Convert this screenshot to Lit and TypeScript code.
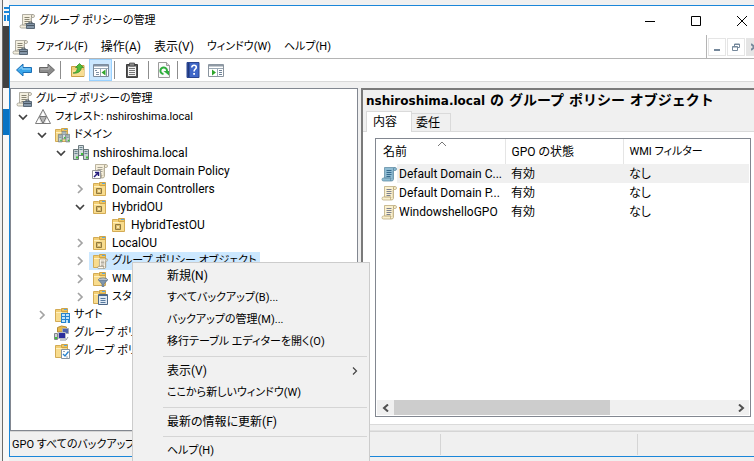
import { LitElement, html, css, svg, nothing, TemplateResult } from "lit";
import { customElement, property, state } from "lit/decorators.js";
import { classMap } from "lit/directives/class-map.js";

type Glyph = ReturnType<typeof svg>;

const folderBase = svg`
  <path d="M1.500 2.500h5l1 1h6v11h-12z" fill="#f3cf74" stroke="#d3ab55"/>
  <path d="M7.500 1.500h6v3h-6z" fill="#f0c65f" stroke="#cfa449"/>
  <path d="M10 2.500h3" stroke="#5aa7e0"/>
  <path d="M2 5h11v9h-11z" fill="#f8dc8e"/>
  <path d="M2 5.500h6" stroke="#fff0c0"/>`;

const sheet = (fill: string, edge: string, line: string) => svg`
  <path d="M3.500 1.500h10.500q1.500 0 1.500 1.500t-1.500 1.500h-1.500v8.500q0 2-2 2h-8q-1.500 0-1.500-1.500t1.500-1.500h1z" fill="${fill}" stroke="${edge}" stroke-opacity=".75"/>
  <path d="M12.500 4.500v-1.500q0-1 1-1.500M3.500 12h6.500q-1 1.500 0 3" fill="none" stroke="${edge}"/>
  <path d="M12 5v8" stroke="${edge}" stroke-opacity=".5"/>
  <path d="M5.500 4.500h5M5.500 6.500h5M5.500 8.500h5M5.500 10.500h4" stroke="${line}"/>`;

const servers = svg`
  <path d="M5.500.5h5v10h-5z" fill="#d5dde0" stroke="#6f7c80"/>
  <path d="M.5 4.500h5v10h-5zM10.500 4.500h5v10h-5z" fill="#c7d0d3" stroke="#69767a"/>
  <path d="M6.500 2.500h3M6.500 4.500h3M1.500 6.500h3M1.500 8.500h3M11.500 6.500h3M11.500 8.500h3" stroke="#6b8790"/>
  <path d="M3 11.500h2v2h-2zM13 11.500h2v2h-2zM8 8h2v2h-2z" fill="#3fc23a"/>`;

const glyphs: Record<string, Glyph> = {
  console: svg`
    ${sheet("#f4efdf", "#98958a", "#8a8674")}
    <path d="M7.500 10.500h8v5h-8z" fill="#8496a8" stroke="#5a6977"/>
    <path d="M10 10.500v-1.500h3v1.500M8 12.500h7" fill="none" stroke="#4a5763"/>`,
  forest: svg`
    <path d="M8 .5l7.500 14h-15z" fill="#dcdcdc" stroke="#7d7d7d"/>
    <path d="M4.500 7.500h7l-3.500 7z" fill="#b4b4b4" stroke="#777"/>
    <path d="M8 2.500l2 4.500h-4zM4 9.500l2 4.500h-4.500zM12 9.500l2.500 4.500h-4.500z" fill="#fff"/>`,
  domains: svg`${folderBase}<g transform="translate(4 4) scale(.75)">${servers}</g>`,
  domain: servers,
  link: svg`
    ${sheet("#f6efdb", "#a59d86", "#a6a294")}
    <path d="M.5 7.500h8v8h-8z" fill="#fff" stroke="#9a9a9a"/>
    <path d="M2 14l4-4M3 9.500h3.500v3.500" fill="none" stroke="#241c7c" stroke-width="1.500"/>`,
  ou: svg`${folderBase}
    <path d="M4.500 7.500h5v5h-5z" fill="#d9b96a" stroke="#8f7940"/>
    <path d="M6 9h2v2h-2z" fill="#f8e6ad"/>`,
  gpos: svg`${folderBase}<g transform="translate(5 5) scale(.7)">${sheet("#fffaf0", "#857c68", "#8c8878")}</g>`,
  wmi: svg`${folderBase}
    <ellipse cx="11" cy="8.500" rx="4.500" ry="1.500" fill="#e6edf3" stroke="#6d7b89"/>
    <path d="M6.500 9l3.500 4v2.500h2v-2.500l3.500-4z" fill="#7f97ae" stroke="#5e7184" stroke-width=".7"/>`,
  starter: svg`${folderBase}
    <path d="M6.500 5.500h9v10h-9z" fill="#dfe9f4" stroke="#4d6787"/>
    <path d="M6 6.500h9.500" stroke="#4d6787"/>
    <path d="M8.500 9.500h5M8.500 11.500h5M8.500 13.500h5" stroke="#56799f"/>`,
  sites: svg`${folderBase}
    <path d="M7 6h9v10h-9z" fill="#2583cf"/>
    <path d="M8 7h3v2h-3zM12 7h3v2h-3zM8 10h3v2h-3zM12 10h3v2h-3zM8 13h3v2h-3zM12 13h2v3h-2z" fill="#bfe3fb"/>`,
  modeling: svg`
    <path d="M3.500 2.500l4-1.500 5 1v5h-9z" fill="#e6b94c" stroke="#b58d38"/>
    <path d="M8.500 3.500h6v5h-6z" fill="#5163ad" stroke="#a5a9b4"/>
    <path d="M4.500 7.500h7v6h-7z" fill="#2c2d9c" stroke="#b9bcc6"/>
    <path d="M.5 8.500h3v6h-3z" fill="#d0d4d8" stroke="#80868d"/>
    <path d="M1 12h2v2h-2z" fill="#3fc23a"/>
    <path d="M6 15h6l2-3" fill="none" stroke="#9094a0"/>`,
  results: svg`${folderBase}
    <path d="M7.500 6.500h8v9h-8z" fill="#fff" stroke="#8793a0"/>
    <path d="M9 11l2 2 3.500-4.500" fill="none" stroke="#2a83cc" stroke-width="1.300"/>
    <path d="M9 8.500h2M12 14h2" stroke="#9aa7b4"/>`,
  gpo: sheet("#fbf1cf", "#b8a778", "#7d8190"),
  gpoSelected: sheet("#8fbcd3", "#5f8ba3", "#35698c"),
  back: svg`<path d="M.5 8l6.500-6v3.500h8.500v5h-8.500v3.500z" fill="#39a5ea" stroke="#1c6fb5"/><path d="M3 7.500l3-3v2.500h8.500" fill="none" stroke="#9bd7fa"/>`,
  forward: svg`<path d="M15.500 8l-6.500-6v3.500h-8.500v5h8.500v3.500z" fill="#8c8c8c" stroke="#666"/><path d="M1.500 7h8.500v-2.500" fill="none" stroke="#bdbdbd"/>`,
  up: svg`
    <path d="M1.500 4.500h5l1-1h6.500v11h-12.500z" fill="#f2cf79" stroke="#c99f45"/>
    <path d="M2 8h12v6h-12z" fill="#f8dd93"/>
    <path d="M3 11q4 0 4.500-5.500h-2l4-4 4 4h-2q-1 6.500-8.500 5.500z" fill="#4fbd3c" stroke="#2e8a24" stroke-width=".7"/>`,
  tree: svg`
    <path d="M.5 2.500h15v12h-15z" fill="#fff" stroke="#7c8a99"/>
    <path d="M1 3.500h14" stroke="#8293a5" stroke-width="2"/>
    <path d="M1 6.500h14M7.500 7v7" stroke="#9aa8b5"/>
    <path d="M2 8.500h2M3 10.500h3M3 12.500h3M13.500 7v7" stroke="#8293a5"/>
    <path d="M8.500 10.500l4-3v6z" fill="#2fa52b"/>`,
  clipboard: svg`
    <path d="M2.500 2.500h11v13h-11z" fill="#555" stroke="#3c3c3c"/>
    <path d="M4 4.500h8v9.500h-8z" fill="#f3f3f3"/>
    <path d="M5.500 1h5v3h-5z" fill="#8a8a8a" stroke="#444" stroke-width=".7"/>
    <path d="M5 6.500h6M5 8.500h6M5 10.500h6M5 12.500h6" stroke="#777"/>`,
  refresh: svg`
    <path d="M2.500.5h8l3 3v12h-11z" fill="#fafafa" stroke="#9b9b9b"/>
    <path d="M10.500.5v3h3" fill="#ddd" stroke="#9b9b9b"/>
    <path d="M7.500 12a3.300 3.300 0 1 1 3.500-3" fill="none" stroke="#2eae3c" stroke-width="2"/>
    <path d="M7.500 9h5.500v4.500z" fill="#2eae3c"/>`,
  help: svg`
    <path d="M2 .5h12v15h-12z" fill="#3f67c8" stroke="#2b4590"/>
    <path d="M3.500 1v14" stroke="#22397c" stroke-width="2"/>
    <path d="M6.700 5.500q.3-2.200 2.300-2.200 2.300 0 2.300 2 0 1.200-1.300 2.100-.9.700-.9 2.100" fill="none" stroke="#fff" stroke-width="1.600"/>
    <path d="M8.200 11h1.800v1.800h-1.800z" fill="#fff"/>`,
  pane: svg`
    <path d="M.5 2.500h15v12h-15z" fill="#fff" stroke="#8a949e"/>
    <path d="M1 3.500h14" stroke="#8f9aa5" stroke-width="2"/>
    <path d="M1 6.500h14M9.500 7v7" stroke="#9aa8b5"/>
    <path d="M11 8.500h3M11 10.500h3M11 12.500h3" stroke="#6d8196"/>
    <path d="M8 10.500l-4-3v6z" fill="#2fa52b"/>`,
};

const icon = (name: string): TemplateResult =>
  html`<svg class="icon" width="16" height="16" viewBox="0 0 16 16" aria-hidden="true">${glyphs[name]}</svg>`;

// Labels that hold katakana are set one size smaller than kanji and Latin labels.
const text = (label: string): TemplateResult =>
  html`<span class=${classMap({ kana: /[ァ-ヶ]/.test(label) })}>${label}</span>`;

interface Node {
  label: string;
  icon: string;
  selected?: boolean;
  expandable?: boolean;
  children?: Node[];
}

const root: Node = {
  label: "グループ ポリシーの管理",
  icon: "console",
  children: [
    {
      label: "フォレスト: nshiroshima.local",
      icon: "forest",
      expandable: true,
      children: [
        {
          label: "ドメイン",
          icon: "domains",
          expandable: true,
          children: [
            {
              label: "nshiroshima.local",
              icon: "domain",
              expandable: true,
              children: [
                { label: "Default Domain Policy", icon: "link" },
                { label: "Domain Controllers", icon: "ou", expandable: true },
                {
                  label: "HybridOU",
                  icon: "ou",
                  expandable: true,
                  children: [{ label: "HybridTestOU", icon: "ou" }],
                },
                { label: "LocalOU", icon: "ou", expandable: true },
                { label: "グループ ポリシー オブジェクト", icon: "gpos", expandable: true, selected: true },
                { label: "WMI フィルター", icon: "wmi", expandable: true },
                { label: "スターター GPO", icon: "starter", expandable: true },
              ],
            },
          ],
        },
        { label: "サイト", icon: "sites", expandable: true },
        { label: "グループ ポリシーのモデル作成", icon: "modeling" },
        { label: "グループ ポリシーの結果", icon: "results" },
      ],
    },
  ],
};

const reset = css`
  * {
    box-sizing: border-box;
  }
  button {
    font: inherit;
    color: inherit;
    background: none;
    border: 0;
    padding: 0;
    margin: 0;
    white-space: nowrap;
    text-align: left;
  }
  ul {
    list-style: none;
    margin: 0;
    padding: 0;
  }
  .kana {
    font-size: 11px;
  }
  .icon {
    display: block;
    flex: none;
  }
`;

@customElement("console-tree")
class ConsoleTree extends LitElement {
  static styles = [
    reset,
    css`
      :host {
        display: block;
        overflow: hidden;
        background: #fff;
        border: 1px solid #828790;
        padding: 1px 0 0 2px;
      }
      .row {
        display: flex;
        height: 18px;
      }
      .twisty {
        width: 14px;
        display: flex;
        align-items: center;
        flex: none;
      }
      .label {
        display: flex;
        align-items: center;
        gap: 4px;
        padding: 0 3px;
        line-height: 18px;
      }
      .label.selected {
        background: #cce8ff;
      }
      .top > ul {
        padding-left: 5px;
      }
      li:not(.top) > ul {
        padding-left: 19px;
      }
    `,
  ];

  private renderNode(node: Node, top = false): TemplateResult {
    const chevron = node.children
      ? html`<svg width="10" height="10" viewBox="0 0 10 10"><path d="M1 3l4 4 4-4" fill="none" stroke="#404040" stroke-width="1.700"/></svg>`
      : html`<svg width="10" height="10" viewBox="0 0 10 10"><path d="M3 1l4 4-4 4" fill="none" stroke="#a3a3a3" stroke-width="1.700"/></svg>`;
    return html`<li class=${classMap({ top })} role="treeitem">
      <div class="row">
        ${top ? nothing : html`<span class="twisty">${node.expandable ? chevron : nothing}</span>`}
        <button class=${classMap({ label: true, selected: !!node.selected })}>${icon(node.icon)}${text(node.label)}</button>
      </div>
      ${node.children ? html`<ul role="group">${node.children.map((c) => this.renderNode(c))}</ul>` : nothing}
    </li>`;
  }

  render() {
    return html`<ul role="tree">${this.renderNode(root, true)}</ul>`;
  }
}

@customElement("details-pane")
class DetailsPane extends LitElement {
  @state() private rows = [
    { name: "Default Domain C...", state: "有効", filter: "なし", selected: true },
    { name: "Default Domain P...", state: "有効", filter: "なし", selected: false },
    { name: "WindowshelloGPO", state: "有効", filter: "なし", selected: false },
  ];

  static styles = [
    reset,
    css`
      :host {
        display: flex;
        flex-direction: column;
        min-width: 0;
        background: #f0f0f0;
        border-left: 2px solid #7a7a7a;
        border-top: 2px solid #7a7a7a;
      }
      h1 {
        margin: 0;
        padding: 0 3px;
        height: 21px;
        font: bold 12px/21px "DejaVu Sans", "Noto Sans CJK JP", sans-serif;
        font-feature-settings: normal;
        white-space: nowrap;
        color: #000;
      }
      h1 span {
        font-size: 14px;
      }
      .tabs {
        display: flex;
        align-items: flex-end;
        padding-left: 3px;
      }
      .tab {
        height: 18px;
        width: 39px;
        padding-left: 4px;
        line-height: 18px;
        border: 1px solid #dadada;
        border-left: 0;
        border-bottom: 0;
      }
      .tab.active {
        height: 21px;
        width: 46px;
        padding-left: 6px;
        margin-bottom: -1px;
        background: #fff;
        border-left: 1px solid #dadada;
        z-index: 1;
      }
      .page {
        flex: 1;
        display: flex;
        background: #fff;
        border-top: 1px solid #dadada;
        border-bottom: 1px solid #dadada;
        padding: 6px 3px 7px 12px;
      }
      .list {
        flex: 1;
        min-width: 0;
        display: flex;
        flex-direction: column;
        border: 1px solid #828790;
        padding: 0 1px 1px;
      }
      table {
        width: 100%;
        table-layout: fixed;
        border-collapse: collapse;
      }
      th,
      td {
        padding: 0 0 0 6px;
        text-align: left;
        font-weight: normal;
        white-space: nowrap;
        overflow: hidden;
      }
      th {
        height: 25px;
        border-right: 1px solid #e5e5e5;
        position: relative;
      }
      th:last-child {
        border-right: 0;
      }
      .name {
        width: 128px;
      }
      .gpo {
        width: 118px;
      }
      .sort {
        position: absolute;
        left: 60px;
        top: 2px;
      }
      td {
        height: 19px;
      }
      .selected td {
        background: #f0f0f0;
      }
      .selected td:first-child {
        background: linear-gradient(90deg, #fff 20px, #f0f0f0 20px);
      }
      td:first-child {
        padding-left: 4px;
      }
      .cell {
        display: flex;
        align-items: center;
        gap: 2px;
      }
      .scroll {
        margin-top: auto;
        display: flex;
        height: 15px;
        background: #f0f0f0;
      }
      .arrow {
        width: 17px;
        display: flex;
        align-items: center;
        justify-content: center;
      }
      .track {
        flex: 1;
      }
      .thumb {
        width: 64%;
        height: 100%;
        background: #cdcdcd;
      }
      .foot {
        height: 6px;
        border-bottom: 1px solid #e2e2e2;
      }
    `,
  ];

  render() {
    return html`
      <h1>nshiroshima.local<span> の グループ ポリシー オブジェクト</span></h1>
      <div class="tabs" role="tablist">
        <button class="tab active" role="tab" aria-selected="true">内容</button>
        <button class="tab" role="tab" aria-selected="false">委任</button>
      </div>
      <div class="page">
        <div class="list">
          <table>
            <thead>
              <tr>
                <th class="name">
                  名前
                  <svg class="sort" width="10" height="6" viewBox="0 0 10 6"><path d="M1 5l4-4 4 4" fill="none" stroke="#777"/></svg>
                </th>
                <th class="gpo">GPO の状態</th>
                <th>${text("WMI フィルター")}</th>
              </tr>
            </thead>
            <tbody>
              ${this.rows.map(
                (r) => html`<tr class=${classMap({ selected: r.selected })}>
                  <td><div class="cell">${icon(r.selected ? "gpoSelected" : "gpo")}<span>${r.name}</span></div></td>
                  <td>${r.state}</td>
                  <td>${text(r.filter)}</td>
                </tr>`,
              )}
            </tbody>
          </table>
          <div class="scroll">
            <button class="arrow" aria-label="左">
              <svg width="8" height="8" viewBox="0 0 8 8"><path d="M6 0.500l-4 3.500 4 3.500" fill="none" stroke="#505050" stroke-width="2"/></svg>
            </button>
            <div class="track"><div class="thumb"></div></div>
            <button class="arrow" aria-label="右">
              <svg width="8" height="8" viewBox="0 0 8 8"><path d="M2 0.500l4 3.500-4 3.500" fill="none" stroke="#505050" stroke-width="2"/></svg>
            </button>
          </div>
        </div>
      </div>
      <div class="foot"></div>
    `;
  }
}

@customElement("context-menu")
class ContextMenu extends LitElement {
  @property({ attribute: false }) groups: string[][] = [];

  static styles = [
    reset,
    css`
      :host {
        display: block;
        background: #f1f1f1;
        border: 1px solid #ccc;
        padding: 2px;
      }
      .item {
        display: flex;
        align-items: center;
        justify-content: space-between;
        width: 100%;
        height: 22px;
        padding: 0 9px 0 32px;
      }
      .group + .group::before {
        content: "";
        display: block;
        height: 1px;
        margin: 3px 0 3px 28px;
        background: #d5d5d5;
      }
    `,
  ];

  render() {
    return this.groups.map(
      (g) => html`<div class="group" role="group">
        ${g.map(
          (label) => html`<button class="item" role="menuitem">
            ${text(label)}
            ${label.startsWith("表示")
              ? html`<svg width="6" height="8" viewBox="0 0 6 8"><path d="M1 .5l3.500 3.500-3.500 3.500" fill="none" stroke="#444" stroke-width="1.200"/></svg>`
              : nothing}
          </button>`,
        )}
      </div>`,
    );
  }
}

@customElement("app-root")
class AppRoot extends LitElement {
  private menus = ["ファイル(F)", "操作(A)", "表示(V)", "ウィンドウ(W)", "ヘルプ(H)"];
  private tools = [["back", "forward"], ["up", "tree"], ["clipboard"], ["refresh"], ["help", "pane"]];
  private actions = [
    ["新規(N)", "すべてバックアップ(B)...", "バックアップの管理(M)...", "移行テーブル エディターを開く(O)"],
    ["表示(V)", "ここから新しいウィンドウ(W)"],
    ["最新の情報に更新(F)"],
    ["ヘルプ(H)"],
  ];

  static styles = [
    reset,
    css`
      :host {
        display: flex;
        position: relative;
        height: 100vh;
        overflow: hidden;
        background: #f0f0f0;
        color: #000;
        font: 12px/18px Roboto, "Noto Sans CJK JP", sans-serif;
        font-feature-settings: "palt";
      }
      .behind {
        flex: none;
        width: 9px;
        display: flex;
        flex-direction: column;
        border-left: 2px solid #f0f0f0;
      }
      .behind div {
        border-left: 1px solid #6b6b6b;
        background: #f8f8f8;
      }
      .behind .head {
        height: 26px;
        display: flex;
        align-items: flex-end;
        justify-content: flex-end;
        padding-bottom: 5px;
      }
      .behind .dark {
        height: 62px;
        background: #404040;
      }
      .behind .gap {
        height: 21px;
      }
      .behind .mark {
        height: 26px;
        background: #0873c4;
      }
      .behind .rest {
        flex: 1;
      }
      .window {
        flex: 1;
        min-width: 0;
        display: flex;
        flex-direction: column;
        margin: 5px 0 4px;
        border: 1px solid #1a86d9;
        border-right: 0;
        overflow: hidden;
      }
      .title {
        display: flex;
        align-items: center;
        height: 29px;
        gap: 4px;
        padding-left: 9px;
        background: #fff;
      }
      .caption {
        margin-left: auto;
        margin-right: -11px;
        display: flex;
      }
      .caption button {
        width: 46px;
        height: 29px;
        display: flex;
        align-items: center;
        justify-content: center;
      }
      .menubar {
        display: flex;
        align-items: center;
        height: 24px;
        padding-left: 2px;
        background: #fff;
        border-bottom: 1px solid #b4b4b4;
      }
      .menubar nav {
        display: flex;
        gap: 13px;
        padding-left: 8px;
      }
      .mdi {
        margin-left: auto;
        margin-right: -10px;
        display: flex;
        align-items: center;
        gap: 1px;
        height: 23px;
        padding-left: 1px;
        border-left: 1px solid #b4b4b4;
      }
      .mdi button {
        width: 18px;
        height: 18px;
        border: 1px solid #e5e5e5;
        display: flex;
        align-items: center;
        justify-content: center;
      }
      .mdi button:last-child {
        background: #e5e5e5;
      }
      .toolbar {
        display: flex;
        align-items: center;
        height: 23px;
        background: #fff;
        border-bottom: 1px solid #d9d9d9;
      }
      .tools {
        display: flex;
        align-items: center;
        height: 18px;
        padding: 0 2px 0 3px;
      }
      .tools + .tools {
        border-left: 1px solid #8d8d8d;
      }
      .tools:first-child {
        padding-left: 2px;
      }
      .tools:nth-child(2) {
        padding-left: 5px;
      }
      .tools:nth-child(3) {
        padding: 0 5px;
      }
      .tool {
        width: 23px;
        height: 22px;
        display: flex;
        align-items: center;
        justify-content: center;
      }
      .tool.on {
        background: #cce8ff;
        border: 1px solid #99d1ff;
      }
      .panes {
        flex: 1;
        min-height: 0;
        display: flex;
        gap: 3px;
        padding-top: 6px;
      }
      .panes console-tree {
        flex: 0 0 348px;
      }
      .panes details-pane {
        flex: 1;
      }
      .status {
        display: flex;
        height: 25px;
        border-top: 1px solid #d5d5d5;
        padding: 2px 0 1px;
      }
      .status div {
        padding-left: 2px;
        line-height: 20px;
        white-space: nowrap;
        flex: 1 1 197px;
        border-right: 1px solid #d5d5d5;
      }
      .status .message {
        flex: 0 0 431px;
      }
      .status div:last-child {
        flex: 0 0 116px;
        border-right: 0;
      }
      context-menu {
        position: absolute;
        left: 132px;
        top: 262px;
        width: 238px;
      }
    `,
  ];

  render() {
    return html`
      <div class="behind">
        <div class="head">
          <svg width="5" height="14" viewBox="0 0 5 14"><path d="M0 1h5M0 5h5M1 8v6M4 8v6" stroke="#1a86d9" stroke-width="2"/></svg>
        </div>
        <div class="dark"></div>
        <div class="gap"></div>
        <div class="mark"></div>
        <div class="rest"></div>
      </div>
      <main class="window">
        <header class="title">
          ${icon("console")}${text("グループ ポリシーの管理")}
          <div class="caption">
            <button aria-label="最小化"><svg width="10" height="10" viewBox="0 0 10 10"><path d="M0 5.500h10" stroke="#000"/></svg></button>
            <button aria-label="最大化"><svg width="10" height="10" viewBox="0 0 10 10"><path d="M.5.5h9v9h-9z" fill="none" stroke="#000"/></svg></button>
            <button aria-label="閉じる"><svg width="10" height="10" viewBox="0 0 10 10"><path d="M0 0l10 10M10 0l-10 10" stroke="#000"/></svg></button>
          </div>
        </header>
        <div class="menubar">
          ${icon("console")}
          <nav>${this.menus.map((m) => html`<button>${text(m)}</button>`)}</nav>
          <div class="mdi">
            <button aria-label="子ウィンドウの最小化"><svg width="8" height="8" viewBox="0 0 8 8"><path d="M1 7h6" stroke="#75889b" stroke-width="2"/></svg></button>
            <button aria-label="子ウィンドウを元に戻す"><svg width="8" height="8" viewBox="0 0 8 8"><path d="M2.500 3v-2h5v3.500h-2M.5 3.500h5v4h-5zM.5 4h5M2.500 1.500h5" fill="none" stroke="#75889b"/></svg></button>
            <button aria-label="子ウィンドウを閉じる"><svg width="8" height="8" viewBox="0 0 8 8"><path d="M0 1l7 6M7 1l-7 6" stroke="#75889b" stroke-width="2"/></svg></button>
          </div>
        </div>
        <div class="toolbar" role="toolbar">
          ${this.tools.map(
            (g) => html`<div class="tools">
              ${g.map((t) => html`<button class=${classMap({ tool: true, on: t === "tree" })} aria-label=${t}>${icon(t)}</button>`)}
            </div>`,
          )}
        </div>
        <div class="panes">
          <console-tree></console-tree>
          <details-pane></details-pane>
        </div>
        <footer class="status">
          <div class="message">${text("GPO すべてのバックアップを作成します")}</div>
          <div></div>
          <div></div>
        </footer>
      </main>
      <context-menu role="menu" .groups=${this.actions}></context-menu>
    `;
  }
}
